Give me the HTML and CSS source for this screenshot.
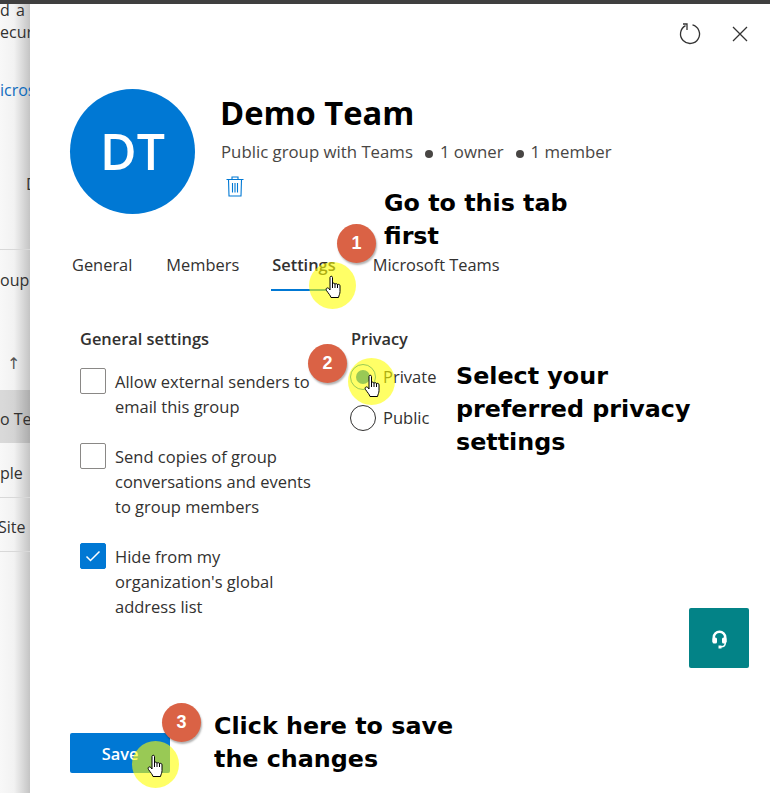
FILE: index.html
```html
<!DOCTYPE html>
<html lang="en">
	<head>
		<meta charset="UTF-8" />
		<title>Demo Team settings</title>
		<link rel="stylesheet" href="styles.css">
	</head>
	<body>
		<div class="topbar"></div>
		<div class="page">
			<div class="backdrop">
				<div class="bd-line bd-first">d a g</div>
				<div class="bd-line">ecur</div>
				<div class="bd-line bd-link">icros</div>
				<div class="bd-line bd-d">D</div>
				<div class="bd-line bd-group">oup</div>
				<div class="bd-line bd-arrow">↑</div>
				<div class="bd-row bd-selected">o Te</div>
				<div class="bd-row bd-ruled bd-sample">ple</div>
				<div class="bd-row bd-ruled bd-site">Site l</div>
			</div>
			<div class="panel">
				<div class="panel-actions">
					<svg class="icon-refresh" width="24" height="24" viewBox="0 0 24 24" fill="none" stroke="#333" stroke-width="1.3">
						<path d="M7.5 3.6A9.5 9.5 0 1 0 14.5 2.8" />
						<path d="M5 2H9V8" />
					</svg>
					<svg class="icon-close" width="16" height="16" viewBox="0 0 16 16" fill="none" stroke="#333" stroke-width="1.3">
						<path d="M1 1L15 15M15 1L1 15" />
					</svg>
				</div>
				<div class="group-header">
					<div class="avatar">DT</div>
					<div class="group-info">
						<h1>Demo Team</h1>
						<div class="group-meta">
							<span>Public group with Teams</span>
							<span class="meta-item">1 owner</span>
							<span class="meta-item">1 member</span>
						</div>
						<svg class="icon-trash" width="18" height="21" viewBox="0 0 18 21" fill="none" stroke="#0078d4" stroke-width="1.1">
							<path d="M0.5 3.5H17.5M6 3.5V1H12V3.5M2.5 3.5L3 20H15L15.500 3.500" />
							<path d="M6.500 7V16.500M9 7V16.500M11.500 7V16.500" />
						</svg>
					</div>
				</div>
				<div class="tabs">
					<span class="tab">General</span>
					<span class="tab">Members</span>
					<span class="tab tab-active">Settings</span>
					<span class="tab">Microsoft Teams</span>
				</div>
				<div class="settings">
					<div class="settings-general">
						<h2>General settings</h2>
						<div class="check-row">
							<span class="checkbox"></span>
							<span class="check-label">Allow external senders to email this group</span>
						</div>
						<div class="check-row">
							<span class="checkbox"></span>
							<span class="check-label">Send copies of group conversations and events to group members</span>
						</div>
						<div class="check-row">
							<span class="checkbox checkbox-on">
								<svg width="16" height="12" viewBox="0 0 16 12" fill="none" stroke="#fff" stroke-width="1.5"><path d="M1.500 6.500L5.500 10.500L14.500 1.500" /></svg>
							</span>
							<span class="check-label">Hide from my organization's global address list</span>
						</div>
					</div>
					<div class="settings-privacy">
						<h2>Privacy</h2>
						<div class="radio-row">
							<span class="radio radio-on"></span>
							<span class="radio-label">Private</span>
						</div>
						<div class="radio-row">
							<span class="radio"></span>
							<span class="radio-label">Public</span>
						</div>
					</div>
				</div>
				<button class="save">Save</button>
			</div>
		</div>

		<div class="help-button">
			<svg class="icon-help" width="15" height="19" viewBox="0 0 15 19" fill="#fff">
				<path d="M7.500 0.500A7 7 0 0 0 0.500 7.500V12H3V7.500A4.500 4.500 0 0 1 12 7.500V12H14.500V7.500A7 7 0 0 0 7.500 0.500Z" />
				<rect x="0.500" y="7.500" width="4.500" height="6" rx="1.500" />
				<rect x="10" y="7.500" width="4.500" height="6" rx="1.500" />
				<path d="M12.500 13H14C14 16 12 17.500 9.500 17.500V18.500H6.500V15.500H9.500V16C11.500 16 12.500 15 12.500 13Z" />
			</svg>
		</div>

		<!-- tutorial overlay -->
		<div class="note note-1">Go to this tab<br />first</div>
		<div class="note note-2">Select your<br />preferred privacy<br />settings</div>
		<div class="note note-3">Click here to save<br />the changes</div>
		<div class="glow glow-1"></div>
		<div class="glow glow-2"></div>
		<div class="glow glow-3"></div>
		<div class="badge badge-1">1</div>
		<div class="badge badge-2">2</div>
		<div class="badge badge-3">3</div>
		<svg class="hand hand-1" width="18" height="24" viewBox="0 0 18 24"><use href="#hand-shape" /></svg>
		<svg class="hand hand-2" width="18" height="24" viewBox="0 0 18 24"><use href="#hand-shape" /></svg>
		<svg class="hand hand-3" width="18" height="24" viewBox="0 0 18 24"><use href="#hand-shape" /></svg>
		<svg class="hand-defs" width="0" height="0">
			<defs>
				<path id="hand-shape" fill="#fff" stroke="#000" stroke-width="1" stroke-linejoin="round" d="M5 2.500C5 0.800 7.500 0.800 7.500 2.500V9C7.500 7.700 10 7.700 10 9.500C10 8.200 12.500 8.200 12.500 10C12.500 9 15 9 15 10.800V16.500C15 19 14 20 13.500 22.500H6C5.500 20.500 3.500 18.500 1.500 15.500C0.300 13.500 2.300 12 3.800 13.500L5 15Z M7.500 9V13M10 9.500V13M12.500 10V13" />
			</defs>
		</svg>
	</body>
</html>
```

FILE: styles.css
```css
* {
	box-sizing: border-box;
	margin: 0;
	padding: 0;
}
html,
body {
	height: 793px;
	overflow: hidden;
}
body {
	position: relative;
	font-family: "Open Sans", "Noto Sans", Arial, sans-serif;
	font-size: 16.4px;
	color: #323130;
	background: #fff;
}
.topbar {
	height: 4px;
	background: #3f3f3f;
}
.page {
	display: flex;
	height: 789px;
}

/* page behind the panel, only its right edge shows */
.backdrop {
	width: 30px;
	flex: none;
	overflow: hidden;
	white-space: nowrap;
	font-size: 16px;
	background: linear-gradient(to right, #f8f8f8 0, #f2f2f2 14px, #c4c4c4 30px);
}
.bd-line {
	height: 22px;
	line-height: 22px;
}
.bd-first {
	margin-top: -5px;
	letter-spacing: 1px;
}
.bd-link {
	margin-top: 36px;
	color: #0f6cbd;
}
.bd-d {
	margin-top: 72px;
	padding-left: 26px;
}
.bd-group {
	margin-top: 54px;
	height: 61px;
	line-height: 60px;
	border-top: 1px solid #d8d8d8;
}
.bd-arrow {
	margin-top: 43px;
	padding-left: 7px;
	font-family: "DejaVu Sans", sans-serif;
	color: #555;
}
.bd-row {
	line-height: 58px;
}
.bd-selected {
	margin-top: 15px;
	height: 53px;
	background: rgba(0, 0, 0, 0.12);
}
.bd-ruled {
	border-bottom: 1px solid #d8d8d8;
}
.bd-sample {
	height: 55px;
	line-height: 60px;
}
.bd-site {
	height: 54px;
	text-indent: -2px;
}

.panel {
	flex: 1;
	background: #fff;
	padding: 0 0 0 40px;
}
.panel-actions {
	display: flex;
	justify-content: flex-end;
	align-items: center;
	gap: 30px;
	height: 60px;
	padding-right: 22px;
}
.group-header {
	display: flex;
	gap: 26px;
	margin-top: 25px;
}
.avatar {
	width: 125px;
	height: 125px;
	border-radius: 50%;
	background: #0078d4;
	color: #fff;
	font-size: 50px;
	font-weight: 600;
	text-align: center;
	line-height: 125px;
}
.group-info h1 {
	font-size: 32.7px;
	font-weight: 700;
	color: #000;
	line-height: 44px;
	margin: 2px 0 0 -1px;
}
.group-meta {
	display: flex;
	gap: 12px;
	font-size: 16.8px;
	font-weight: 500;
	color: #484644;
	margin-top: 5px;
	line-height: 24px;
}
.meta-item::before {
	content: "";
	display: inline-block;
	width: 8px;
	height: 8px;
	border-radius: 50%;
	background: #484644;
	margin-right: 7px;
	vertical-align: 0;
}
.icon-trash {
	display: block;
	margin: 12px 0 0 5px;
}
.tabs {
	display: flex;
	gap: 34px;
	margin-top: 30px;
	padding-left: 2px;
}
.tab {
	height: 47px;
	line-height: 42px;
}
.tab-active {
	font-weight: 600;
	padding-left: 1px;
	margin: 0 3px 0 -2px;
	background: linear-gradient(#0078d4, #0078d4) left bottom / 60px 2px no-repeat;
}
.settings {
	display: flex;
	padding-left: 10px;
	margin-top: 36px;
	font-size: 16.5px;
	line-height: 25px;
}
.settings h2 {
	font-size: 16.4px;
	font-weight: 600;
	line-height: 24px;
}
.settings-general {
	width: 271px;
	flex: none;
}
.check-row {
	display: flex;
	gap: 9px;
	margin-top: 17px;
	margin-bottom: 24px;
	padding-right: 30px;
}
.check-row + .check-row {
	margin-top: 0;
}
.check-label {
	padding-top: 1px;
}
.checkbox {
	width: 26px;
	height: 26px;
	flex: none;
	border: 1px solid #8a8886;
	border-radius: 2px;
}
.checkbox-on {
	display: flex;
	align-items: center;
	justify-content: center;
	background: #0078d4;
	border-color: #0078d4;
}
.radio-row {
	display: flex;
	align-items: center;
	gap: 7px;
	height: 26px;
}
.radio-row + .radio-row {
	margin-top: 15px;
}
.radio-row:first-of-type {
	margin-top: 13px;
}
.radio-label {
	padding-bottom: 2px;
}
.radio {
	position: relative;
	width: 26px;
	height: 26px;
	flex: none;
	margin-left: -1px;
	border: 1px solid #323130;
	border-radius: 50%;
}
.radio-on {
	border-color: #0078d4;
}
.radio-on::after {
	content: "";
	position: absolute;
	top: 5px;
	left: 5px;
	width: 14px;
	height: 14px;
	border-radius: 50%;
	background: #0078d4;
}
.save {
	display: block;
	position: absolute;
	left: 70px;
	top: 733px;
	width: 100px;
	height: 40px;
	background: #0078d4;
	color: #fff;
	border: none;
	border-radius: 2px;
	font-family: inherit;
	font-size: 16.4px;
	font-weight: 600;
}
.help-button {
	position: absolute;
	left: 689px;
	top: 608px;
	width: 60px;
	height: 60px;
	display: flex;
	align-items: center;
	justify-content: center;
	padding: 3px 0 0 0;
	background: #038387;
	border-radius: 2px;
}

/* tutorial overlay */
.note {
	position: absolute;
	font-family: "DejaVu Sans", Verdana, sans-serif;
	font-size: 23.8px;
	font-weight: 700;
	line-height: 33px;
	color: #000;
	white-space: nowrap;
}
.note-1 {
	left: 384px;
	top: 187px;
}
.note-2 {
	left: 456px;
	top: 360px;
}
.note-3 {
	left: 214px;
	top: 710px;
}
.glow {
	position: absolute;
	width: 47px;
	height: 47px;
	border-radius: 50%;
	background: rgba(255, 255, 0, 0.6);
}
.glow-1 {
	left: 309px;
	top: 262px;
}
.glow-2 {
	left: 348px;
	top: 358px;
}
.glow-3 {
	left: 132px;
	top: 741px;
}
.badge {
	position: absolute;
	width: 39px;
	height: 39px;
	border-radius: 50%;
	background: #da6245;
	color: #fff;
	font-family: "Liberation Sans", Arial, sans-serif;
	font-size: 18px;
	font-weight: 700;
	text-align: center;
	line-height: 39px;
	box-shadow: 1px 2px 2px rgba(0, 0, 0, 0.3);
}
.badge-1 {
	left: 337px;
	top: 224px;
}
.badge-2 {
	left: 308px;
	top: 344px;
}
.badge-3 {
	left: 162px;
	top: 703px;
}
.hand {
	position: absolute;
}
.hand-1 {
	left: 325px;
	top: 275px;
}
.hand-2 {
	left: 364px;
	top: 374px;
}
.hand-3 {
	left: 147px;
	top: 754px;
}
.hand-defs {
	position: absolute;
}
```
